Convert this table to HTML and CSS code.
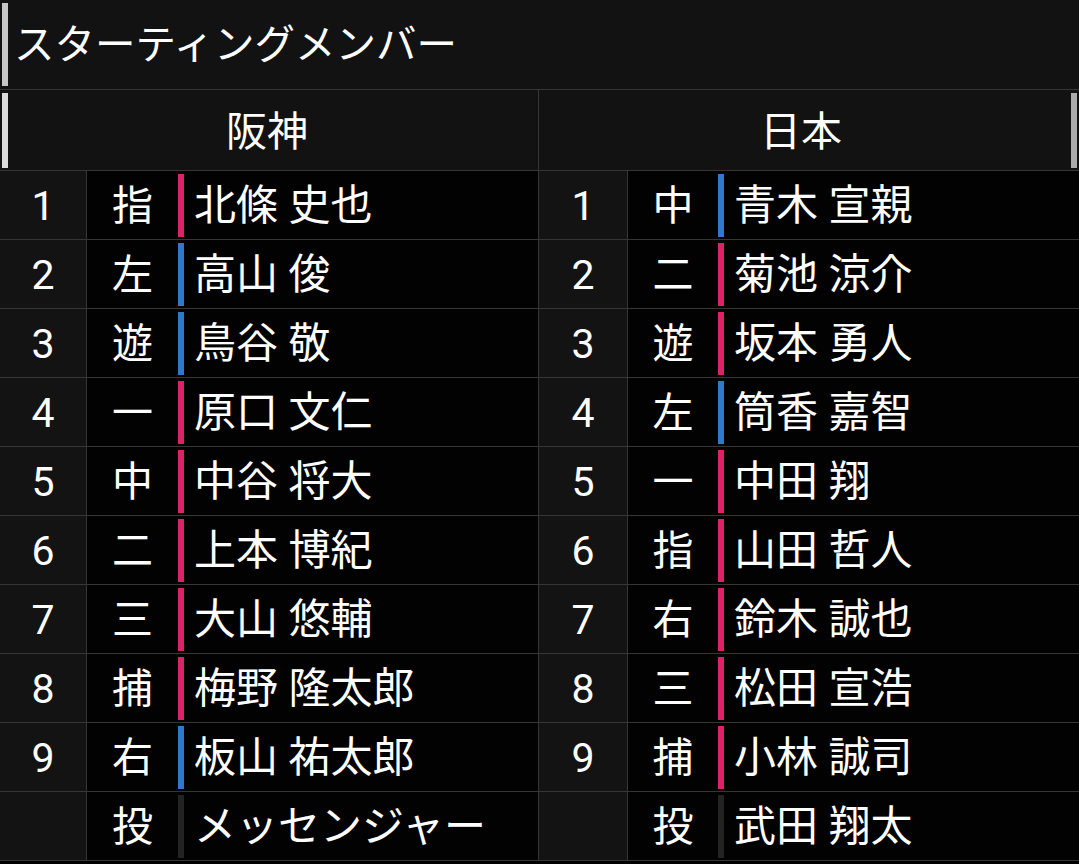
FILE: index.html
```html
<!DOCTYPE html>
<html lang="ja">
<head>
<meta charset="utf-8">
<title>スターティングメンバー</title>
<link rel="stylesheet" href="styles.css">
</head>
<body>
<div class="page">
  <div class="title">
    <div class="title-bar"></div>
    <div class="title-text">スターティングメンバー</div>
  </div>
  <div class="teams">
    <div class="half left">
      <div class="team-head">
        <div class="head-bar light"></div>
        <div class="team-name">阪神</div>
      </div>
      <div class="row"><div class="num">1</div><div class="pos">指</div><div class="bar pink"></div><div class="name">北條 史也</div></div>
      <div class="row"><div class="num">2</div><div class="pos">左</div><div class="bar blue"></div><div class="name">高山 俊</div></div>
      <div class="row"><div class="num">3</div><div class="pos">遊</div><div class="bar blue"></div><div class="name">鳥谷 敬</div></div>
      <div class="row"><div class="num">4</div><div class="pos">一</div><div class="bar pink"></div><div class="name">原口 文仁</div></div>
      <div class="row"><div class="num">5</div><div class="pos">中</div><div class="bar pink"></div><div class="name">中谷 将大</div></div>
      <div class="row"><div class="num">6</div><div class="pos">二</div><div class="bar pink"></div><div class="name">上本 博紀</div></div>
      <div class="row"><div class="num">7</div><div class="pos">三</div><div class="bar pink"></div><div class="name">大山 悠輔</div></div>
      <div class="row"><div class="num">8</div><div class="pos">捕</div><div class="bar pink"></div><div class="name">梅野 隆太郎</div></div>
      <div class="row"><div class="num">9</div><div class="pos">右</div><div class="bar blue"></div><div class="name">板山 祐太郎</div></div>
      <div class="row"><div class="num"></div><div class="pos">投</div><div class="bar gray"></div><div class="name">メッセンジャー</div></div>
    </div>
    <div class="half right">
      <div class="team-head">
        <div class="team-name">日本</div>
        <div class="head-bar dim"></div>
      </div>
      <div class="row"><div class="num">1</div><div class="pos">中</div><div class="bar blue"></div><div class="name">青木 宣親</div></div>
      <div class="row"><div class="num">2</div><div class="pos">二</div><div class="bar pink"></div><div class="name">菊池 涼介</div></div>
      <div class="row"><div class="num">3</div><div class="pos">遊</div><div class="bar pink"></div><div class="name">坂本 勇人</div></div>
      <div class="row"><div class="num">4</div><div class="pos">左</div><div class="bar blue"></div><div class="name">筒香 嘉智</div></div>
      <div class="row"><div class="num">5</div><div class="pos">一</div><div class="bar pink"></div><div class="name">中田 翔</div></div>
      <div class="row"><div class="num">6</div><div class="pos">指</div><div class="bar pink"></div><div class="name">山田 哲人</div></div>
      <div class="row"><div class="num">7</div><div class="pos">右</div><div class="bar pink"></div><div class="name">鈴木 誠也</div></div>
      <div class="row"><div class="num">8</div><div class="pos">三</div><div class="bar pink"></div><div class="name">松田 宣浩</div></div>
      <div class="row"><div class="num">9</div><div class="pos">捕</div><div class="bar pink"></div><div class="name">小林 誠司</div></div>
      <div class="row"><div class="num"></div><div class="pos">投</div><div class="bar gray"></div><div class="name">武田 翔太</div></div>
    </div>
  </div>
</div>
</body>
</html>
```

FILE: styles.css
```css
* { box-sizing: border-box; }
html, body {
  margin: 0;
  padding: 0;
  background: #000;
}
body {
  width: 1079px;
  height: 864px;
  overflow: hidden;
  font-family: "Roboto", "Noto Sans CJK JP", sans-serif;
  color: #fff;
}
.page {
  display: flex;
  flex-direction: column;
}
.title {
  height: 90px;
  background: #121212;
  border-bottom: 1px solid #363636;
  display: flex;
  align-items: stretch;
  padding: 3px 0 3px 2px;
}
.title-bar {
  width: 6px;
  background: #c6c6c6;
}
.title-text {
  font-size: 40.5px;
  line-height: 84px;
  margin-left: 6px;
}
.teams {
  display: grid;
  grid-template-columns: 539px 540px;
}
.half {
  display: flex;
  flex-direction: column;
}
.half.left {
  border-right: 1px solid #363636;
}
.team-head {
  height: 81px;
  background: #121212;
  border-bottom: 1px solid #363636;
  display: flex;
  align-items: stretch;
  padding: 3px 2px 2px 2px;
}
.head-bar {
  width: 6px;
}
.head-bar.light { background: #dcdcdc; }
.head-bar.dim { background: #ababab; }
.team-name {
  flex: 1;
  text-align: center;
  font-size: 41px;
  line-height: 78px;
  padding-right: 10px;
}
.row {
  height: 69px;
  display: flex;
  align-items: stretch;
  border-bottom: 1px solid #363636;
  background: #020202;
}
.num {
  width: 87px;
  background: #131313;
  border-right: 1px solid #363636;
  text-align: center;
  font-size: 41px;
  line-height: 70px;
}
.right .num {
  width: 89px;
}
.pos {
  width: 91px;
  text-align: center;
  font-size: 41px;
  line-height: 70px;
}
.right .pos {
  width: 90px;
}
.bar {
  width: 6px;
  margin: 3px 0 2px;
}
.bar.pink { background: #dc2268; }
.bar.blue { background: #2f78cc; }
.bar.gray { background: #232323; }
.name {
  flex: 1;
  padding-left: 10px;
  font-size: 42px;
  line-height: 70px;
  white-space: nowrap;
}
```
